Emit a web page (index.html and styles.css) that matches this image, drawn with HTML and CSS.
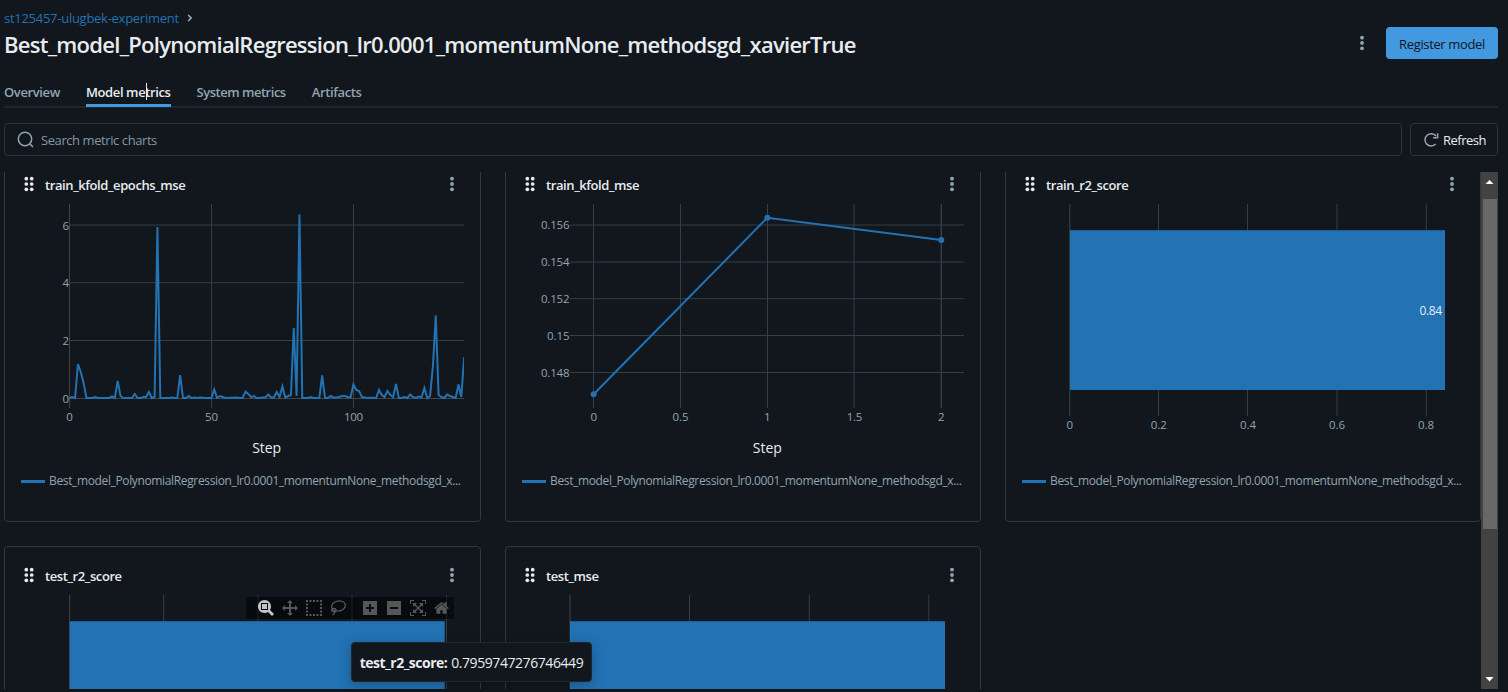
FILE: index.html
```
<!DOCTYPE html>
<html lang="en">
<head>
<meta charset="utf-8">
<title>Model metrics</title>
<link rel="stylesheet" href="styles.css">
</head>
<body>
<svg class="defs" width="0" height="0">
  <symbol id="grip" viewBox="0 0 10 16"><g fill="#e8ecf0"><circle cx="2.3" cy="2.7" r="1.85"/><circle cx="7.7" cy="2.7" r="1.85"/><circle cx="2.3" cy="8" r="1.85"/><circle cx="7.7" cy="8" r="1.85"/><circle cx="2.3" cy="13.3" r="1.85"/><circle cx="7.7" cy="13.3" r="1.85"/></g></symbol>
  <symbol id="kebab" viewBox="0 0 6 16"><g fill="#92a4b3"><circle cx="3" cy="2.7" r="1.9"/><circle cx="3" cy="8" r="1.9"/><circle cx="3" cy="13.3" r="1.9"/></g></symbol>
</svg>
<div class="page">
  <nav class="crumbs"><a class="crumb">st125457-ulugbek-experiment</a><svg width="6" height="8" viewBox="0 0 6 8"><path d="M1.2 1 L4.2 4 L1.2 7" fill="none" stroke="#a9b8c4" stroke-width="1.4"/></svg></nav>
  <header class="head">
    <h1 class="title">Best_model_PolynomialRegression_lr0.0001_momentumNone_methodsgd_xavierTrue</h1>
    <svg class="head-menu" width="6" height="16"><use href="#kebab"/></svg>
    <button class="register"><span>Register model</span></button>
  </header>
  <div class="tabs">
    <span class="tab">Overview</span>
    <span class="tab active">Model metrics<i class="caret"></i></span>
    <span class="tab wide">System metrics</span>
    <span class="tab">Artifacts</span>
  </div>
  <div class="tools">
    <div class="search">
      <svg width="18" height="18" viewBox="0 0 18 18"><g fill="none" stroke="#92a4b3" stroke-width="1.5"><circle cx="8" cy="8" r="6.7"/><path d="M12.6 12.6 L16 16"/></g></svg>
      <span>Search metric charts</span>
    </div>
    <button class="refresh"><svg width="16" height="16" viewBox="0 0 16 16"><path d="M12.7 12.1 A6.2 6.2 0 1 1 13 3.9" fill="none" stroke="#92a4b3" stroke-width="1.5"/><path d="M14.6 1.2 V5.7 H10.1" fill="none" stroke="#92a4b3" stroke-width="1.5"/></svg><span>Refresh</span></button>
  </div>
  <div class="scroller">
    <div class="pane">
      <div class="grid">
        <section class="card">
          <div class="card-head"><svg width="10" height="16"><use href="#grip"/></svg><h2>train_kfold_epochs_mse</h2><svg width="6" height="16"><use href="#kebab"/></svg></div>
          <svg class="plot" viewBox="5 204 474 264">
            <g class="gridlines"><path d="M69 225H464M69 282.7H464M69 340.5H464M211.5 204V408M353.5 204V408"/><path class="zero" d="M69.5 204V408M69 398.5H464"/></g>
            <g class="ticks end"><text x="69" y="229.5">6</text><text x="69" y="287">4</text><text x="69" y="344.5">2</text><text x="69" y="402.5">0</text></g>
            <g class="ticks"><text x="69.5" y="420.5">0</text><text x="211.5" y="420.5" textLength="13">50</text><text x="353.5" y="420.5" textLength="19">100</text></g>
            <clipPath id="clip1"><rect x="69" y="204" width="395" height="204"/></clipPath>
            <g clip-path="url(#clip1)"><polyline class="series" vector-effect="non-scaling-stroke" transform="translate(69.4 0) scale(2.84 1)" points="0,398 1,397 2,398 3,364 4,372 5,383 6,398 8,398 9,397 10,398 14,398 15,396.5 16,398 17,381 18,396 19,398 22,398 23,394 24,398 25,398 26,397 27,397 28,392 29,398 30,397 31,227 32,398 35,398 36,397.5 37,398 38,398 39,375 40,398 41,398 42,396 43,398 44,397.5 45,398 46,397.5 48,398 50,398 51,389.5 52,398 53,396 54,397 55,398 59,397.5 60,398 61,398 62,391.7 63,394 64,397 65,396 66,398 67,398 68,397.5 69,397.5 70,394.5 71,397.5 72,397.5 73,392 74,397 75,386.5 76,397.5 77,396 78,395 79,328 80,396 81,214.5 82,398 84,398 85,397 86,398 88,398 89,375.5 90,398 91,398 92,396 93,397.5 94,397.5 95,397 96,396 97,396 98,397 99,397.5 100,384.5 101,390 102,391 103,397 104,397.5 108,398 109,390 110,395 111,397 112,391 113,395 114,397 115,384 116,398 117,398 118,397 119,398 120,394.5 121,397 122,398 123,396.5 124,397.5 125,388 126,398 127,396 128,366 129,315.5 130,395 131,397 132,398 133,394.5 134,396 135,397 136,398 137,384.5 138,397 139,357"/></g>
            <text class="axis" x="266.7" y="452.5" textLength="29">Step</text>
          </svg>
          <div class="legend"><i></i><span>Best_model_PolynomialRegression_lr0.0001_momentumNone_methodsgd_x...</span></div>
        </section>
        <section class="card">
          <div class="card-head"><svg width="10" height="16"><use href="#grip"/></svg><h2>train_kfold_mse</h2><svg width="6" height="16"><use href="#kebab"/></svg></div>
          <svg class="plot" viewBox="506 204 474 264">
            <g class="gridlines"><path d="M570 225H964M570 262H964M570 298.7H964M570 335.5H964M570 372.5H964M593.5 204V408M680.5 204V408M767.5 204V408M854 204V408"/><path d="M941.3 204V408" class="strong"/></g>
            <g class="ticks end"><text x="569.5" y="229" textLength="28.5">0.156</text><text x="569.5" y="266" textLength="28.5">0.154</text><text x="569.5" y="303" textLength="28.5">0.152</text><text x="569.5" y="340" textLength="22.5">0.15</text><text x="569.5" y="376.5" textLength="28.5">0.148</text></g>
            <g class="ticks"><text x="593.7" y="420.5">0</text><text x="680.5" y="420.5" textLength="16">0.5</text><text x="767.3" y="420.5">1</text><text x="854.5" y="420.5" textLength="15.5">1.5</text><text x="941.3" y="420.5">2</text></g>
            <polyline class="series" points="593.6,394.3 767.4,217.7 941.3,240"/>
            <g fill="#2272b4"><circle cx="593.6" cy="394.3" r="3"/><circle cx="767.4" cy="217.7" r="3"/><circle cx="941.3" cy="240" r="3"/></g>
            <text class="axis" x="767.3" y="452.5" textLength="29">Step</text>
          </svg>
          <div class="legend"><i></i><span>Best_model_PolynomialRegression_lr0.0001_momentumNone_methodsgd_x...</span></div>
        </section>
        <section class="card">
          <div class="card-head"><svg width="10" height="16"><use href="#grip"/></svg><h2>train_r2_score</h2><svg width="6" height="16"><use href="#kebab"/></svg></div>
          <svg class="plot" viewBox="1006 204 474 264">
            <g class="gridlines"><path d="M1158.5 204V416M1247.5 204V416M1337 204V416M1426.3 204V416"/><path class="zero" d="M1069.8 204V416"/></g>
            <rect x="1070" y="230.2" width="375" height="159.8" fill="#2272b4"/>
            <text class="value" x="1442" y="315" textLength="22.5">0.84</text>
            <g class="ticks"><text x="1069.7" y="428.5">0</text><text x="1158.8" y="428.5" textLength="16">0.2</text><text x="1248" y="428.5" textLength="16">0.4</text><text x="1337" y="428.5" textLength="16">0.6</text><text x="1426" y="428.5" textLength="16">0.8</text></g>
          </svg>
          <div class="legend"><i></i><span>Best_model_PolynomialRegression_lr0.0001_momentumNone_methodsgd_x...</span></div>
        </section>
        <section class="card">
          <div class="card-head"><svg width="10" height="16"><use href="#grip"/></svg><h2>test_r2_score</h2><svg width="6" height="16"><use href="#kebab"/></svg></div>
          <svg class="plot" viewBox="5 595 474 264">
            <g class="gridlines"><path d="M163.7 595V807M258 595V807M352 595V807M446.5 595V807"/><path class="zero" d="M69.7 595V807"/></g>
            <rect x="69.7" y="621.2" width="375" height="159.8" fill="#2272b4"/>
          </svg>
          <div class="modebar">
            <svg class="on" width="16" height="16" viewBox="0 0 1000 1000"><path transform="matrix(1 0 0 -1 0 850)" d="m1000-25l-250 251c40 63 63 138 63 218 0 224-182 406-407 406-224 0-406-182-406-406s183-406 407-406c80 0 155 22 218 62l250-250 125 125z m-812 250l0 438 437 0 0-438-437 0z m62 375l313 0 0-312-313 0 0 312z"/></svg>
            <svg width="16" height="16" viewBox="0 0 1000 1000"><path transform="matrix(1 0 0 -1 0 850)" d="m1000 350l-187 188 0-125-250 0 0 250 125 0-188 187-187-187 125 0 0-250-250 0 0 125-188-188 186-187 0 125 252 0 0-250-125 0 187-188 188 188-125 0 0 250 250 0 0-126 187 188z"/></svg>
            <svg width="16" height="16" viewBox="0 0 16 16"><path d="M0 0h2v2H0zM3.5 0h2v2h-2zM7 0h2v2H7zM10.5 0h2v2h-2zM14 0h2v2h-2zM0 3.5h2v2H0zM14 3.5h2v2h-2zM0 7h2v2H0zM14 7h2v2h-2zM0 10.5h2v2H0zM14 10.5h2v2h-2zM0 14h2v2H0zM3.5 14h2v2h-2zM7 14h2v2H7zM10.5 14h2v2h-2zM14 14h2v2h-2z"/></svg>
            <svg width="16" height="16" viewBox="0 0 16 16"><g fill="none" stroke="#555759" stroke-width="1.3"><ellipse cx="8.5" cy="6" rx="6.9" ry="5" transform="rotate(-12 8.5 6)"/><ellipse cx="3.8" cy="10" rx="2.2" ry="1.7"/><path d="M4.8 11.2 Q5.4 13 2.6 15"/></g></svg>
            <svg class="gap" width="14" height="16" viewBox="0 0 875 1000"><path transform="matrix(1 0 0 -1 0 850)" d="m1 787l0-875 875 0 0 875-875 0z m687-500l-187 0 0-187-125 0 0 187-188 0 0 125 188 0 0 187 125 0 0-187 187 0 0-125z"/></svg>
            <svg class="minus" width="14" height="16" viewBox="0 0 875 1000"><path transform="matrix(1 0 0 -1 0 850)" d="m0 788l0-876 875 0 0 876-875 0z m688-500l-500 0 0 125 500 0 0-125z"/></svg>
            <svg class="auto" width="16" height="16" viewBox="0 0 1000 1000"><path transform="matrix(1 0 0 -1 0 850)" d="m250 850l-187 0-63 0 0-62 0-188 63 0 0 188 187 0 0 62z m688 0l-188 0 0-62 188 0 0-188 62 0 0 188 0 62-62 0z m-875-938l0 188-63 0 0-188 0-62 63 0 187 0 0 62-187 0z m875 188l0-188-188 0 0-62 188 0 62 0 0 62 0 188-62 0z m-125 188l-1 0-93-94-156 156 156 156 92-93 2 0 0 250-250 0 0-2 93-92-156-156-156 156 94 92 0 2-250 0 0-250 0 0 93 93 157-156-157-156-93 94 0 0 0-250 250 0 0 0-94 93 156 157 156-157-93-93 0 0 250 0 0 250z"/></svg>
            <svg width="15" height="16" viewBox="0 0 928.6 1000"><path transform="matrix(1 0 0 -1 0 850)" d="m786 296v-267q0-15-11-26t-25-10h-214v214h-143v-214h-214q-15 0-25 10t-11 26v267q0 1 0 2t0 2l321 264 321-264q1-1 1-4z m124 39l-34-41q-5-5-12-6h-2q-7 0-12 3l-386 322-386-322q-7-4-13-4-7 2-12 7l-35 41q-4 5-3 13t6 12l401 334q18 15 42 15t43-15l136-114v109q0 8 5 13t13 5h107q8 0 13-5t5-13v-227l122-102q5-5 6-12t-4-13z"/></svg>
          </div>
        </section>
        <section class="card">
          <div class="card-head"><svg width="10" height="16"><use href="#grip"/></svg><h2>test_mse</h2><svg width="6" height="16"><use href="#kebab"/></svg></div>
          <svg class="plot" viewBox="506 595 474 264">
            <g class="gridlines"><path d="M689.5 595V807M809.3 595V807M928.8 595V807"/><path class="zero" d="M570 595V807"/></g>
            <rect x="570" y="621.2" width="375" height="159.8" fill="#2272b4"/>
          </svg>
        </section>
      </div>
    </div>
    <div class="scrollbar">
      <svg width="17" height="17" viewBox="0 0 17 17"><path d="M4.5 12h8L8.5 8z" fill="#fff"/></svg>
      <div class="thumb"></div>
      <svg class="down" width="17" height="17" viewBox="0 0 17 17"><path d="M4.5 5h8L8.5 9.5z" fill="#fff"/></svg>
    </div>
  </div>
</div>
<div class="tooltip"><b>test_r2_score:</b><span>0.7959747276746449</span></div>
</body>
</html>
```
FILE: styles.css
```
* { box-sizing: border-box; }
body { margin: 0; background: #11171c; color: #e8ecf0; font-family: "Open Sans", "Noto Sans", sans-serif; font-size: 13px; line-height: 20px; height: 692px; overflow: hidden; }
svg { display: block; flex: none; }
.defs { position: absolute; }
.page { display: flex; flex-direction: column; height: 692px; padding: 8px 10px 3px 4px; white-space: nowrap; }
.crumbs { display: flex; align-items: center; gap: 8px; height: 20px; color: #2272b4; }
.crumb { letter-spacing: -0.27px; }
.head { display: flex; align-items: center; height: 32px; margin-top: -1px; }
.title { margin: 2px 0 0; flex: 1; font-size: 22px; line-height: 28px; font-weight: 600; letter-spacing: -0.72px; }
.head-menu { margin-right: 21px; }
button { font: inherit; border: 0; padding: 0; border-radius: 4px; height: 32px; display: flex; align-items: center; justify-content: center; }
.register { width: 112px; padding-top: 1px; background: #4299e0; color: #11171c; letter-spacing: -0.36px; }
.tabs { display: flex; gap: 26px; height: 33px; margin-top: 16px; border-bottom: 2px solid #1f272d; font-weight: 600; letter-spacing: -0.38px; color: #92a4b3; }
.tab { height: 32px; padding-top: 7px; }
.wide { letter-spacing: -0.48px; }
.active { color: #e8ecf0; border-bottom: 3px solid #4299e0; position: relative; }
.caret { position: absolute; left: 60px; top: 8px; width: 1px; height: 17px; background: #e8ecf0; }
.tools { display: flex; gap: 8px; margin-top: 15px; }
.search { flex: 1; display: flex; align-items: center; gap: 6px; height: 33px; padding-left: 12px; border: 1px solid #2a343b; border-radius: 4px; color: #8396a5; letter-spacing: -0.42px; }
.refresh { width: 88px; height: 33px; gap: 4px; padding-left: 1px; background: transparent; border: 1px solid #2a343b; color: #e8ecf0; letter-spacing: -0.5px; }
.scroller { flex: 1; min-height: 0; display: flex; margin-top: 16px; }
.pane { flex: 1; overflow: hidden; }
.grid { display: grid; grid-template-columns: 477px 476px 476px; grid-auto-rows: 367px; gap: 24px; margin-top: -17px; }
.card { position: relative; border: 1px solid #2e3940; border-radius: 4px; overflow: hidden; }
.card-head { display: flex; align-items: center; height: 48px; padding: 8px 25px 0 19px; }
.card-head h2 { flex: 1; margin: 1px 0 0 11px; font-size: 13px; line-height: 20px; font-weight: 600; letter-spacing: -0.41px; }
.plot { width: 474px; height: 264px; }
.gridlines path { stroke: #333e45; stroke-width: 1; fill: none; }
.gridlines .zero { stroke: #444; }
.gridlines .strong { stroke-width: 1.5; }
.ticks text { font-size: 11.5px; fill: #92a4b3; text-anchor: middle; }
.ticks.end text { text-anchor: end; }
.series { fill: none; stroke: #2272b4; stroke-width: 2; }
.axis { font-size: 14px; fill: #e8ecf0; text-anchor: middle; }
.value { font-size: 12px; fill: #e8ecf0; text-anchor: end; }
.legend { display: flex; align-items: center; gap: 4px; padding-left: 16px; height: 20px; margin-top: 3px; font-size: 12px; letter-spacing: -0.36px; color: #92a4b3; }
.legend i { flex: none; width: 24px; height: 3px; background: #2272b4; }
.modebar { position: absolute; left: 241px; top: 50px; width: 208px; height: 22px; padding-left: 12px; display: flex; align-items: center; gap: 8px; background: rgba(0,0,0,.5); fill: #555759; }
.modebar .on { fill: #c3c4c5; }
.gap { margin-left: 9px; }
.minus { margin-left: 2px; }
.auto { margin-left: 1px; }
.scrollbar { width: 17px; background: #424242; display: flex; flex-direction: column; }
.thumb { height: 330px; margin: 10px 1px 0 2px; background: #686868; }
.down { margin-top: auto; }
.tooltip { position: absolute; left: 351px; top: 642px; width: 241px; height: 40px; padding-top: 1px; display: flex; align-items: center; justify-content: center; gap: 4px; background: #11171c; border: 1px solid #1f272d; border-radius: 4px; font-size: 14px; letter-spacing: -0.43px; box-shadow: 0 3px 12px rgba(0,0,0,.25); white-space: nowrap; }
.tooltip b { letter-spacing: -0.52px; }
```
